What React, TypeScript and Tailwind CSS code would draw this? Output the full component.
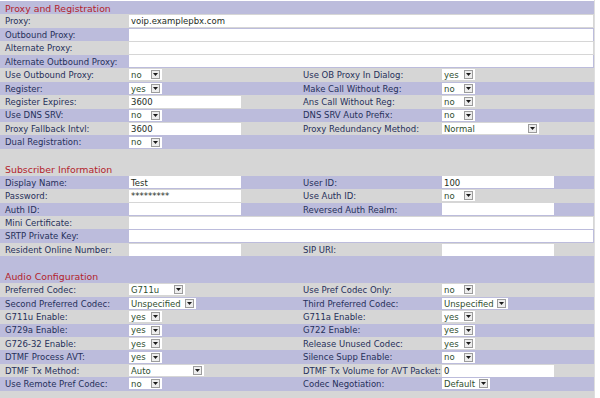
import React from "react";

type Field =
  | { t: "input"; v: string; w: string }
  | { t: "select"; v: string; w: string }
  | { t: "none" };

type Row =
  | { kind: "header"; title: string; stripe: number }
  | { kind: "empty"; stripe: number }
  | { kind: "wide"; label: string; v: string; stripe: number }
  | { kind: "pair"; stripe: number; l: string; lf: Field; r?: string; rf?: Field };

const yn = (v: string): Field => ({ t: "select", v, w: "w-[33px]" });
const inp = (v: string): Field => ({ t: "input", v, w: "w-[112px]" });

const rows: Row[] = [
  { kind: "header", title: "Proxy and Registration", stripe: 0 },
  { kind: "wide", label: "Proxy:", v: "voip.examplepbx.com", stripe: 1 },
  { kind: "wide", label: "Outbound Proxy:", v: "", stripe: 2 },
  { kind: "wide", label: "Alternate Proxy:", v: "", stripe: 3 },
  { kind: "wide", label: "Alternate Outbound Proxy:", v: "", stripe: 4 },
  { kind: "pair", stripe: 5, l: "Use Outbound Proxy:", lf: yn("no"), r: "Use OB Proxy In Dialog:", rf: yn("yes") },
  { kind: "pair", stripe: 6, l: "Register:", lf: yn("yes"), r: "Make Call Without Reg:", rf: yn("no") },
  { kind: "pair", stripe: 7, l: "Register Expires:", lf: inp("3600"), r: "Ans Call Without Reg:", rf: yn("no") },
  { kind: "pair", stripe: 8, l: "Use DNS SRV:", lf: yn("no"), r: "DNS SRV Auto Prefix:", rf: yn("no") },
  {
    kind: "pair",
    stripe: 9,
    l: "Proxy Fallback Intvl:",
    lf: inp("3600"),
    r: "Proxy Redundancy Method:",
    rf: { t: "select", v: "Normal", w: "w-[97px]" },
  },
  { kind: "pair", stripe: 10, l: "Dual Registration:", lf: yn("no") },
  { kind: "empty", stripe: 11 },

  { kind: "header", title: "Subscriber Information", stripe: 11 },
  { kind: "pair", stripe: 12, l: "Display Name:", lf: inp("Test"), r: "User ID:", rf: inp("100") },
  { kind: "pair", stripe: 13, l: "Password:", lf: inp("*********"), r: "Use Auth ID:", rf: yn("no") },
  { kind: "pair", stripe: 14, l: "Auth ID:", lf: inp(""), r: "Reversed Auth Realm:", rf: inp("") },
  { kind: "wide", label: "Mini Certificate:", v: "", stripe: 15 },
  { kind: "wide", label: "SRTP Private Key:", v: "", stripe: 16 },
  { kind: "pair", stripe: 17, l: "Resident Online Number:", lf: inp(""), r: "SIP URI:", rf: inp("") },
  { kind: "empty", stripe: 18 },

  { kind: "header", title: "Audio Configuration", stripe: 18 },
  {
    kind: "pair",
    stripe: 19,
    l: "Preferred Codec:",
    lf: { t: "select", v: "G711u", w: "w-[56px]" },
    r: "Use Pref Codec Only:",
    rf: yn("no"),
  },
  {
    kind: "pair",
    stripe: 20,
    l: "Second Preferred Codec:",
    lf: { t: "select", v: "Unspecified", w: "w-[67px]" },
    r: "Third Preferred Codec:",
    rf: { t: "select", v: "Unspecified", w: "w-[66px]" },
  },
  { kind: "pair", stripe: 21, l: "G711u Enable:", lf: yn("yes"), r: "G711a Enable:", rf: yn("yes") },
  { kind: "pair", stripe: 22, l: "G729a Enable:", lf: yn("yes"), r: "G722 Enable:", rf: yn("yes") },
  { kind: "pair", stripe: 23, l: "G726-32 Enable:", lf: yn("yes"), r: "Release Unused Codec:", rf: yn("yes") },
  { kind: "pair", stripe: 24, l: "DTMF Process AVT:", lf: yn("yes"), r: "Silence Supp Enable:", rf: yn("no") },
  {
    kind: "pair",
    stripe: 25,
    l: "DTMF Tx Method:",
    lf: { t: "select", v: "Auto", w: "w-[75px]" },
    r: "DTMF Tx Volume for AVT Packet:",
    rf: inp("0"),
  },
  {
    kind: "pair",
    stripe: 26,
    l: "Use Remote Pref Codec:",
    lf: yn("no"),
    r: "Codec Negotiation:",
    rf: { t: "select", v: "Default", w: "w-[48px]" },
  },
  { kind: "empty", stripe: 27 },
];

const FieldBox = ({ f }: { f: Field }) => {
  if (f.t === "none") return null;
  if (f.t === "input") {
    return (
      <div className={`flex h-[12px] items-center bg-white pl-[2px] pt-[1px] text-[#1e2e1e] ${f.w}`}>
        {f.v}
      </div>
    );
  }
  return (
    <div className={`flex h-[11px] items-center justify-between bg-white pl-[2px] pr-[2px] text-[#2f4f2f] ${f.w}`}>
      <span className="pt-[1px]">{f.v}</span>
      <span className="flex h-[9px] w-[9px] shrink-0 items-center justify-center border border-[#9c9c9c] bg-[#ededed]">
        <svg width="5" height="3" viewBox="0 0 5 3">
          <path d="M0 0h5L2.5 3z" fill="#1a1a1a" />
        </svg>
      </span>
    </div>
  );
};

const App = () => {
  return (
    <div className="h-[398px] w-[600px] overflow-hidden bg-white font-['DejaVu_Sans',sans-serif] text-[8.5px] leading-none">
      <div className="w-[595px] border-r border-[#dedede] pt-[1px]">
        {rows.map((row, i) => {
          const bg = row.stripe % 2 === 0 ? "bg-[#bcbcdc]" : "bg-[#d6d6d6]";
          if (row.kind === "header") {
            return (
              <div key={i} className={`flex h-[13.44px] items-center pl-[5px] pt-[1px] text-[9.4px] text-[#b3232c] ${bg}`}>
                {row.title}
              </div>
            );
          }
          if (row.kind === "empty") {
            return <div key={i} className={`h-[13.44px] ${bg}`}></div>;
          }
          if (row.kind === "wide") {
            return (
              <div key={i} className={`flex h-[13.44px] items-center ${bg}`}>
                <div className="w-[128px] pl-[5px] pt-[1px] text-[#26305a]">{row.label}</div>
                <div className="pl-[1px]">
                  <div className="flex h-[12px] w-[464px] items-center bg-white pl-[2px] pt-[1px] text-[#1e2e1e]">
                    {row.v}
                  </div>
                </div>
              </div>
            );
          }
          return (
            <div key={i} className={`flex h-[13.44px] items-center ${bg}`}>
              <div className="w-[128px] pl-[5px] pt-[1px] text-[#26305a]">{row.l}</div>
              <div className="w-[172px] pl-[1px]">
                <FieldBox f={row.lf} />
              </div>
              <div className="w-[141px] whitespace-nowrap pl-[3px] pt-[1px] text-[#26305a]">{row.r}</div>
              <div className="w-[153px] pl-[1px]">{row.rf && <FieldBox f={row.rf} />}</div>
            </div>
          );
        })}
      </div>
    </div>
  );
};

export default App;
